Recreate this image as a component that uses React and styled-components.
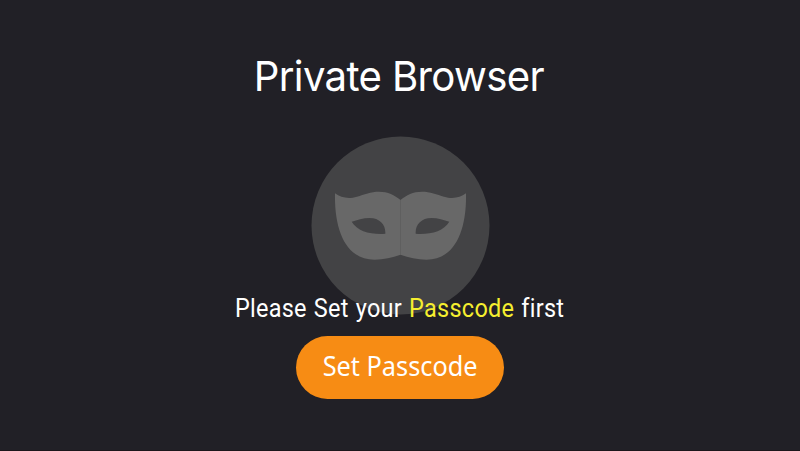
import React from "react";
import styled, { createGlobalStyle } from "styled-components";

const GlobalStyle = createGlobalStyle`
  * { box-sizing: border-box; }
  body { margin: 0; background: #212026; }
`;

const Screen = styled.main`
  display: flex;
  flex-direction: column;
  align-items: center;
  width: 800px;
  height: 451px;
  overflow: hidden;
  background: #212026;
  border-bottom: 1px solid #1b161b;
  color: #fff;
`;

const Title = styled.h1`
  margin: 51px 2px 0 0;
  height: 50px;
  font: 400 41.5px/50px Inter, sans-serif;
  letter-spacing: -0.7px;
  white-space: nowrap;
  transform: scaleX(0.968);
`;

const Emblem = styled.svg`
  flex: none;
  width: 180px;
  height: 180px;
  margin: 35px 0 0;
`;

const Message = styled.p`
  position: relative;
  margin: -23px 0 0;
  height: 32px;
  font: 400 25px/32px Roboto, sans-serif;
  letter-spacing: 0.3px;
  word-spacing: 1px;
  white-space: nowrap;
  transform: scaleX(0.938);
`;

const Highlight = styled.span`
  color: #f5ee2f;
`;

const PasscodeButton = styled.button`
  flex: none;
  width: 208px;
  height: 63px;
  margin: 11px 0 0;
  padding: 0 0 3px;
  border: 0;
  border-radius: 32px;
  background: #f78c14;
  color: #fff;
  font: 400 26.5px/36px "Noto Sans", sans-serif;
  white-space: nowrap;
`;

const ButtonLabel = styled.span`
  display: inline-block;
  transform: scaleX(0.955);
`;

const maskHalf =
  "M335 193.3C341 197.5 348 199.5 357 196.7C364 194.5 371 191.7 379 191.7C388 191.7 394.5 195 400.5 200V254.7C392 257.5 384 259.7 374.5 259.7C347 259.7 334.2 232 335 193.3ZM351.7 221.7C357 220 363 217.9 369.5 217.9C380 217.9 386 225 385.3 233.8C371 234.8 357.5 231.5 351.7 221.7Z";

function MaskEmblem() {
  return (
    <Emblem viewBox="310 136 180 180" aria-hidden="true">
      <circle cx="400.5" cy="225.5" r="89" fill="#434345" />
      <g fill="#686868" fillRule="evenodd">
        <path d={maskHalf} />
        <path d={maskHalf} transform="translate(801 0) scale(-1 1)" />
      </g>
      <path d="M400.5 200V254.7" stroke="#606060" strokeWidth="0.7" />
    </Emblem>
  );
}

export default function App() {
  return (
    <>
      <GlobalStyle />
      <Screen>
        <Title>Private Browser</Title>
        <MaskEmblem />
        <Message>
          Please Set your <Highlight>Passcode</Highlight> first
        </Message>
        <PasscodeButton type="button">
          <ButtonLabel>Set Passcode</ButtonLabel>
        </PasscodeButton>
      </Screen>
    </>
  );
}
